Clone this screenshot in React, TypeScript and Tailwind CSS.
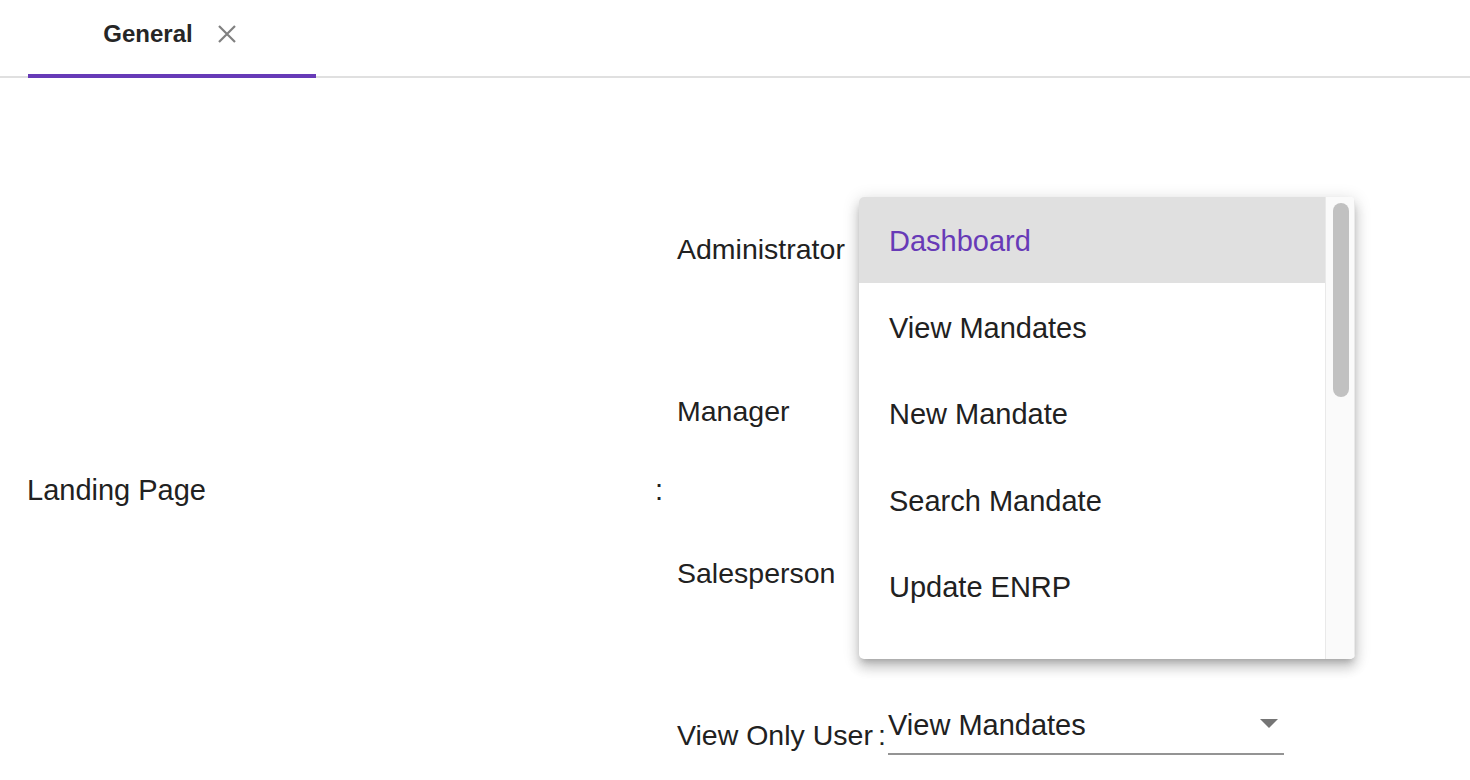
const ROLES = [
  { name: "Administrator", value: "" },
  { name: "Manager", value: "" },
  { name: "Salesperson", value: "" },
  { name: "View Only User", value: "View Mandates" },
];
const OPTIONS = ["Dashboard", "View Mandates", "New Mandate", "Search Mandate", "Update ENRP"];

function Select({ value }: { value: string }) {
  return (
    <div className="mb-[14px] flex h-[56px] w-[396px] items-center justify-between border-b-2 border-[#949494] pr-[6px]">
      <span className="text-[29px] text-[#212121]">{value}</span>
      <svg width="18" height="9" viewBox="0 0 18 9" className="mb-[6px]">
        <path d="M0 0h18L9 9z" fill="#757575" />
      </svg>
    </div>
  );
}

function Menu() {
  return (
    <div className="absolute left-[859px] top-[197px] flex h-[462px] w-[496px] overflow-hidden rounded-[5px] bg-white shadow-[0_5px_6px_-3px_rgba(0,0,0,0.2),0_9px_12px_1px_rgba(0,0,0,0.14),0_3px_16px_2px_rgba(0,0,0,0.12)]">
      <ul className="flex-1">
        {OPTIONS.map((o, i) => (
          <li
            key={o}
            className={
              i === 0
                ? "flex h-[86px] items-center bg-[#e0e0e0] pl-[30px] pt-[4px] text-[29px] text-[#673ab7]"
                : "flex h-[86.5px] items-center pl-[30px] pt-[4px] text-[29px] text-[#212121]"
            }
          >
            {o}
          </li>
        ))}
      </ul>
      <div className="w-[30px] border-x border-[#e9e9e9] bg-[#fafafa] pl-[7px] pt-[6px]">
        <div className="h-[194px] w-[16px] rounded-full bg-[#c1c1c1]" />
      </div>
    </div>
  );
}

export default function App() {
  return (
    <div className="relative h-[780px] overflow-hidden bg-white font-['Liberation_Sans',Arial,sans-serif] text-[#212121]">
      <div className="flex h-[78px] border-b-2 border-[#e0e0e0] pl-[28px]">
        <div className="relative flex h-[76px] w-[288px] items-start justify-center pt-[16px]">
          <span className="ml-[-4px] text-[24px] font-semibold leading-[36px] text-[#262626]">General</span>
          <svg width="20" height="20" viewBox="0 0 20 20" className="ml-[24px] mt-[8px]">
            <path d="M2 2L18 18M18 2L2 18" stroke="#808080" strokeWidth="2.2" />
          </svg>
          <div className="absolute bottom-[-2px] left-0 h-[4px] w-full bg-[#673ab7]" />
        </div>
      </div>

      <div className="flex items-center pl-[27px] pt-[89px]">
        <div className="w-[628px] text-[29px]">Landing Page</div>
        <div className="w-[22px] text-[29px]">:</div>
        <div className="flex flex-col">
          {ROLES.map((r) => (
            <div key={r.name} className="flex h-[162px] items-center">
              <div className="flex w-[211px] items-center justify-between pr-[2px] pt-[2px] text-[28.5px]">
                <span>{r.name}</span>
                <span>:</span>
              </div>
              <Select value={r.value} />
            </div>
          ))}
        </div>
      </div>

      <Menu />
    </div>
  );
}
